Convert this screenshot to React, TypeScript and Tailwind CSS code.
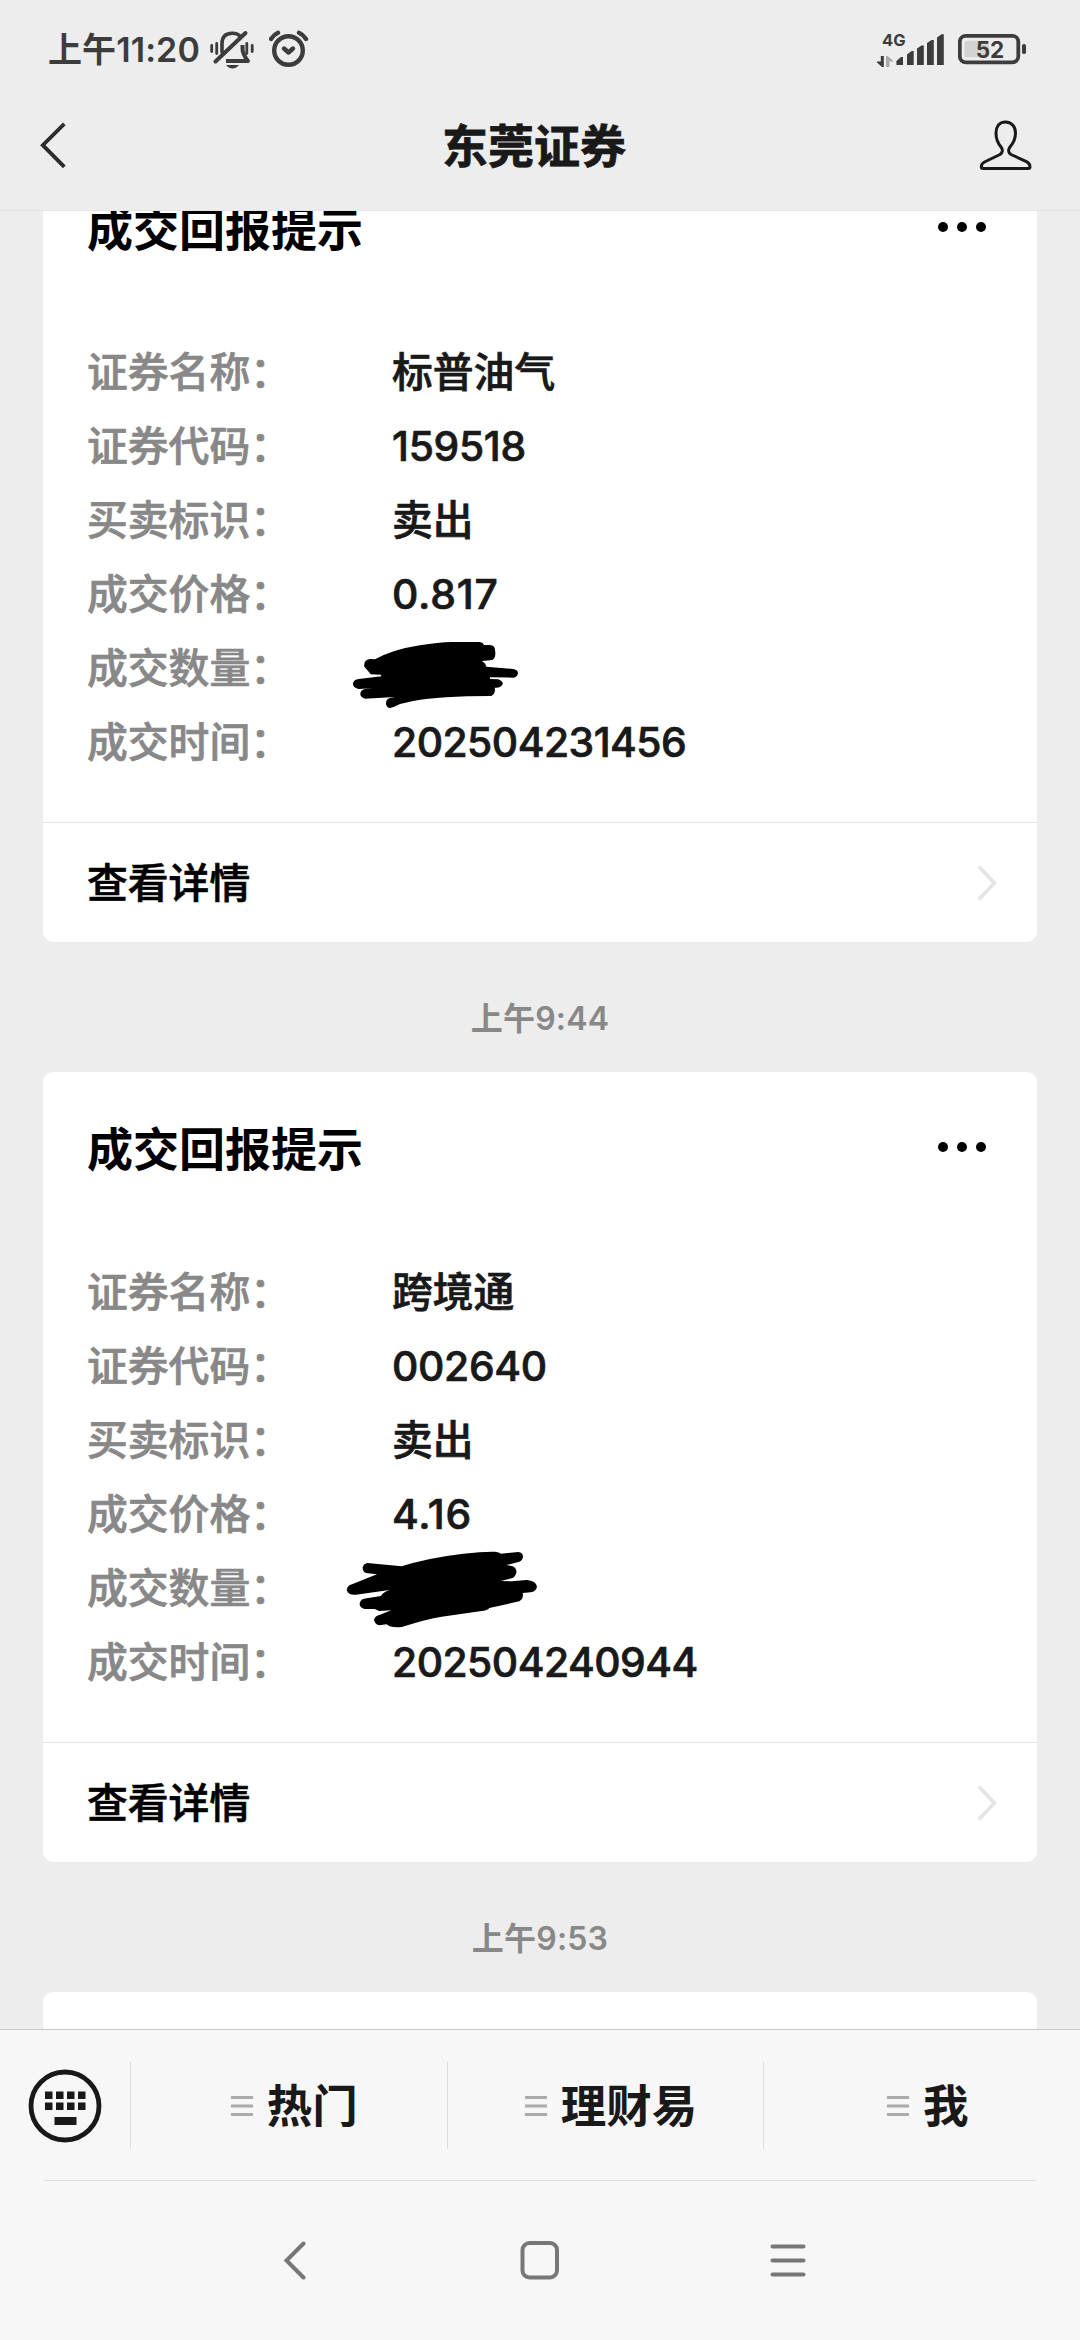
import React from 'react';

type Notice = {
  name: string;
  code: string;
  side: string;
  price: string;
  time: string;
  mark: React.ReactNode;
};

const NOTICES: Notice[] = [
  { name: '标普油气', code: '159518', side: '卖出', price: '0.817', time: '202504231456', mark: <ScribbleA /> },
  { name: '跨境通',   code: '002640', side: '卖出', price: '4.16',  time: '202504240944', mark: <ScribbleB /> },
];

const TIMES = ['上午9:44', '上午9:53'];

const MENUS = ['热门', '理财易', '我'];

function ScribbleA() {
  return (
    <svg viewBox="0 0 660 330" className="absolute -left-[61px] -top-[11px] w-[220px] h-[110px]">
      <path d="M103 140Q100 118 122 117L135 118Q190 88 270 76Q325 67 365 66L450 66Q460 68 462 75L480 75Q495 77 495 90Q500 118 482 121L455 123Q466 128 469 140L550 147Q564 150 564 160Q562 172 550 173L480 172L480 177L505 178Q520 184 518 193Q512 205 494 203Q498 220 484 228Q330 228 250 243L210 252Q190 262 180 264Q167 262 168 248Q170 236 180 234L195 231L105 236Q90 232 91 220Q94 208 106 207L130 205L85 207Q68 202 69 190Q72 178 86 177L155 169L152 164L122 163Q115 153 103 140Z" />
    </svg>
  );
}

function ScribbleB() {
  return (
    <svg viewBox="0 0 690 360" className="absolute -left-[61px] -top-[21px] w-[230px] h-[120px]">
      <path d="M112 99L215 109Q290 84 400 71Q460 64 495 65Q508 66 513 71L565 66Q579 68 579 80Q577 92 568 95L530 105L548 109Q561 116 559 128Q555 142 545 145L512 153L545 154L590 150Q618 152 621 170Q618 184 602 187L578 189Q582 205 568 214L478 234Q472 242 455 243L335 260Q290 267 215 291Q180 294 170 283L148 286Q132 282 132 268Q135 258 150 254L184 241L148 243L134 237L103 237Q88 233 89 219Q93 206 110 205L153 198Q158 188 178 180L78 194Q54 196 50 180Q52 167 66 163L141 133L108 129Q97 124 98 112Q102 100 112 99Z" />
    </svg>
  );
}

function StatusBar() {
  return (
    <div className="flex h-[100px] justify-between pl-12 pr-[52px] pt-[30px] text-[#3c3c3c]">
      <div className="flex h-10 items-center">
        <span className="w-[155px] whitespace-nowrap text-[34px] font-semibold leading-10 tracking-[0.1px]">上午11:20</span>
        {/* muted bell */}
        <svg viewBox="0 0 46 40" className="ml-[6px] h-10 w-[46px]" fill="none" stroke="currentColor" strokeLinecap="round">
          <path d="M2.7 15.5v6M7.7 13.5v10M37.8 13.5v10M43.2 15.5v6" strokeWidth="2.8" />
          <path d="M13 22V13.5Q13 3.5 23 3.2Q28 3 31 6" strokeWidth="3.6" />
          <path d="M6.5 31.5L36.500 3" strokeWidth="4" />
          <path d="M33.500 15V19Q33.500 24 39 31H17" strokeWidth="4" strokeLinecap="butt" strokeLinejoin="round" />
          <path d="M17 35H30Q27 38.500 23.500 38.500T17 35Z" fill="currentColor" stroke="none" />
        </svg>
        {/* alarm */}
        <svg viewBox="0 0 40 40" className="ml-[14px] h-10 w-10" fill="none" stroke="currentColor" strokeWidth="4.4" strokeLinecap="round" strokeLinejoin="round">
          <circle cx="19.500" cy="20.500" r="14.300" />
          <path d="M15 18.500L19.500 22.500L24 18.500" />
          <path d="M2 9Q5 4.500 9 2.800M37 9Q34 4.500 30 2.800" />
        </svg>
      </div>
      <div className="flex h-10 items-center">
        <div className="flex h-9 w-7 flex-col justify-between">
          <span className="pl-[5px] text-[16.500px] font-bold leading-4">4G</span>
          <svg viewBox="0 0 17 12" className="h-3 w-[17px]">
            <path d="M3.800 0H6.800V11H5L0 6.500V5.500H3.800Z" fill="#3c3c3c" />
            <path d="M9 0H10.500L16 4.500V5.500H12.500V11H9Z" fill="#ababab" />
          </svg>
        </div>
        <svg viewBox="0 0 50 40" className="-ml-[9px] h-10 w-[50px]" fill="currentColor">
          <path d="M0.400 35V31L5 27H7V35ZM11 35V24.500L15.500 21H17.700V35ZM21 35V18.500L25.500 15.500H27.800V35ZM31 35V13L35.500 10H37.800V35ZM41 35V7.500L45.500 4.300H47.800V35Z" />
        </svg>
        <svg viewBox="0 0 70 40" className="ml-[12px] h-10 w-[70px]">
          <rect x="1.800" y="5.800" width="58.500" height="26.500" rx="6" fill="none" stroke="#3c3c3c" strokeWidth="3.800" />
          <rect x="6.500" y="10.700" width="24.500" height="16.500" rx="2.500" fill="#d2d2d2" />
          <rect x="64" y="14" width="4" height="10" rx="1.800" fill="#3c3c3c" />
          <text x="32" y="27.800" textAnchor="middle" fontSize="22.500" fontWeight="700" fill="#3c3c3c">52</text>
        </svg>
      </div>
    </div>
  );
}

function TitleBar() {
  return (
    <div className="flex h-[110px] items-start justify-between pl-[38px] pr-[47px] text-[#191919]">
      <svg viewBox="0 0 60 50" className="mt-5 h-[50px] w-[60px]" fill="none" stroke="#2c2c2c" strokeWidth="3.800">
        <path d="M26.300 3.800L4.800 25.200L26.300 46.800" />
      </svg>
      <h1 className="mr-[3px] mt-[17px] text-[46px] font-bold leading-[58px] [-webkit-text-stroke:0.8px]">东莞证券</h1>
      <svg viewBox="0 0 60 52" className="mt-[19px] h-[52px] w-[60px]" fill="none" stroke="currentColor" strokeWidth="3" strokeLinejoin="round">
        <path d="M32.500 2.900C26 2.900 23 8 23 14C23 20.500 25 24.500 28 28C30 30.500 30 33.500 27 35.500L11.500 43C8.500 44.500 8.300 46 8.300 48Q8.300 49.500 10 49.500H55Q57 49.500 57 48C57 45.500 56.500 44 53.500 42.600L38 35.500C35 33.500 35 30.500 37 28C40 24.500 42.500 20.500 42.500 14C42.500 8 39 2.900 32.500 2.900Z" />
      </svg>
    </div>
  );
}

function Row({ label, children }: { label: string; children: React.ReactNode }) {
  return (
    <div className="flex h-[74px] items-center text-[40.800px] font-medium leading-none [-webkit-text-stroke:0.7px]">
      <span className="w-[304px] text-[#888]">{label}：</span>
      <span className="pl-px text-[#191919]">{children}</span>
    </div>
  );
}

function Card({ notice }: { notice: Notice }) {
  return (
    <div className="flex h-[790px] flex-col rounded-[10px] bg-white">
      <div className="flex h-[154px] items-center justify-between pl-11 pr-[51px]">
        <h2 className="text-[46px] font-bold leading-none text-black">成交回报提示</h2>
        <div className="mb-1 flex gap-[9px]">
          <i className="size-[10px] rounded-full bg-black" />
          <i className="size-[10px] rounded-full bg-black" />
          <i className="size-[10px] rounded-full bg-black" />
        </div>
      </div>
      <div className="flex flex-col pl-11 pt-[29px]">
        <Row label="证券名称">{notice.name}</Row>
        <Row label="证券代码"><span className="tracking-[-0.3px]">{notice.code}</span></Row>
        <Row label="买卖标识">{notice.side}</Row>
        <Row label="成交价格"><span className="tracking-[0.8px]">{notice.price}</span></Row>
        <div className="relative">
          <Row label="成交数量">{null}</Row>
          <div className="absolute left-[304px] top-0">{notice.mark}</div>
        </div>
        <Row label="成交时间"><span className="tracking-[-0.5px]">{notice.time}</span></Row>
      </div>
      <div className="mt-auto flex h-[120px] items-center justify-between border-t border-[#e5e5e5] pl-11 pr-10">
        <span className="pt-0.5 text-[40.800px] font-medium leading-none text-black [-webkit-text-stroke:0.7px]">查看详情</span>
        <svg viewBox="0 0 20 36" className="h-9 w-5" fill="none" stroke="#e4e4e4" strokeWidth="3.600">
          <path d="M1.800 1.500L17.500 18L1.800 34.500" />
        </svg>
      </div>
    </div>
  );
}

function MenuLines() {
  return (
    <svg viewBox="0 0 22 22" className="h-[22px] w-[22px]" stroke="#ababab" strokeWidth="3.200">
      <path d="M0 2.500H22M0 11H22M0 19.500H22" />
    </svg>
  );
}

function BottomMenu() {
  return (
    <div className="h-[151px] border-t border-[#c9c9c9] pt-8">
      <div className="flex h-[87px] items-center">
        <div className="flex w-[130px] shrink-0 justify-center">
          <svg viewBox="0 0 74 74" className="size-[74px]" fill="#191919">
            <circle cx="37" cy="37" r="34" fill="none" stroke="#191919" strokeWidth="4.800" />
            <path d="M17 22.500h7.500v7.500h-7.500zM28 22.500h7.500v7.500h-7.500zM39 22.500h7.500v7.500h-7.500zM50 22.500h7.500v7.500h-7.500zM17 33.500h7.500v7.500h-7.500zM28 33.500h7.500v7.500h-7.500zM39 33.500h7.500v7.500h-7.500zM50 33.500h7.500v7.500h-7.500zM26.500 48h22v8h-22z" />
          </svg>
        </div>
        {MENUS.map(menu => (
          <div key={menu} className="flex h-full flex-1 items-center justify-center gap-[14px] border-l border-[#dcdcdc] pl-[11px]">
            <MenuLines />
            <span className="pt-0.5 text-[45.500px] font-bold leading-none text-[#191919]">{menu}</span>
          </div>
        ))}
      </div>
    </div>
  );
}

function SystemNav() {
  return (
    <div className="mx-[44px] flex h-[160px] border-t border-[#dcdcdc] pt-[60px]">
      <svg viewBox="0 0 24 40" className="ml-[239px] h-10 w-6" fill="none" stroke="#777" strokeWidth="4" strokeLinecap="round">
        <path d="M20.500 2.500L3.500 19.500L20.500 36.500" />
      </svg>
      <svg viewBox="0 0 40 40" className="ml-[213px] size-10" fill="none" stroke="#777" strokeWidth="4">
        <rect x="2.500" y="2" width="34.500" height="34.500" rx="7" />
      </svg>
      <svg viewBox="0 0 40 40" className="ml-[209px] size-10" fill="none" stroke="#777" strokeWidth="4" strokeLinecap="round">
        <path d="M3.500 5.500H34.500M3.500 19.500H34.500M3.500 33.500H34.500" />
      </svg>
    </div>
  );
}

export default function App() {
  return (
    <div className="flex h-[2340px] w-[1080px] flex-col overflow-hidden bg-[#ededed] font-['Inter','Noto_Sans_CJK_SC',sans-serif]">
      <header className="h-[211px] shrink-0 border-b border-[#e4e4e4]">
        <StatusBar />
        <TitleBar />
      </header>

      <main className="h-[1818px] shrink-0 overflow-hidden px-[43px]">
        <div className="-mt-[59px]">
          {NOTICES.map((notice, i) => (
            <div key={notice.time}>
              <Card notice={notice} />
              <div className="flex h-[130px] items-center justify-center pb-[23px] pt-[46px] text-[32px] font-semibold leading-none tracking-[0.2px] text-[#888]">
                {TIMES[i]}
              </div>
            </div>
          ))}
          <div className="h-[790px] rounded-[10px] bg-white" />
        </div>
      </main>

      <footer className="h-[311px] shrink-0 bg-[#f7f7f7]">
        <BottomMenu />
        <SystemNav />
      </footer>
    </div>
  );
}
